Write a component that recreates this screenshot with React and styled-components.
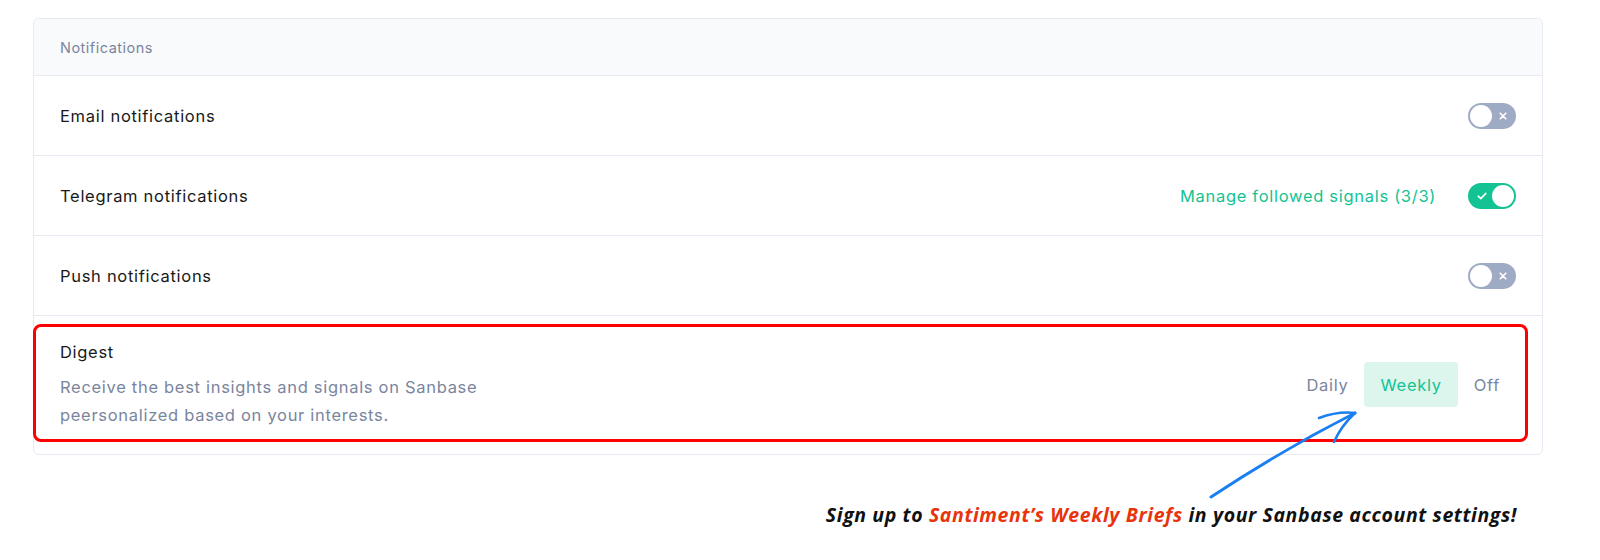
import React from 'react';
import styled, { createGlobalStyle } from 'styled-components';

const GlobalStyle = createGlobalStyle`
  body {
    margin: 0;
    background: #fff;
    font-family: Inter, "Noto Sans", sans-serif;
    color: #181919;
    letter-spacing: 0.7px;
  }
`;

const Page = styled.div`
  position: relative;
  width: 1600px;
  height: 560px;
  box-sizing: border-box;
  padding: 18px 57px 0 33px;
`;

const Card = styled.div`
  border: 1px solid #e7eaf3;
  border-radius: 6px;
  background: #fff;
`;

const Header = styled.div`
  height: 56px;
  display: flex;
  align-items: center;
  padding: 0 26px;
  background: #f9fafc;
  border-bottom: 1px solid #e7eaf3;
  border-radius: 6px 6px 0 0;
  font-size: 14.5px;
  letter-spacing: 0.5px;
  color: #7a859e;
`;

const Row = styled.div`
  position: relative;
  display: flex;
  align-items: center;
  justify-content: space-between;
  min-height: 79px;
  padding: 0 26px;
  border-bottom: ${p => (p.last ? 'none' : '1px solid #e7eaf3')};
`;

const DigestRow = styled(Row)`
  padding: 24px 26px 25px;
`;

const Label = styled.div`
  font-size: 16.5px;
  line-height: 24px;
`;

const Right = styled.div`
  display: flex;
  align-items: center;
  gap: 32px;
`;

const ManageLink = styled.a`
  font-size: 16.5px;
  color: #14c393;
  text-decoration: none;
  cursor: pointer;
`;

const ToggleTrack = styled.div`
  position: relative;
  width: 48px;
  height: 26px;
  border-radius: 13px;
  background: ${p => (p.on ? '#14c393' : '#9faac4')};
  display: flex;
  align-items: center;
  justify-content: ${p => (p.on ? 'flex-start' : 'flex-end')};
  padding: 0 9px;
  box-sizing: border-box;
`;

const Knob = styled.span`
  position: absolute;
  top: 2px;
  left: ${p => (p.on ? '24px' : '2px')};
  width: 22px;
  height: 22px;
  border-radius: 50%;
  background: #fff;
`;

const Toggle = ({ on }) => (
  <ToggleTrack on={on ? 1 : 0}>
    {on ? (
      <svg width="10" height="8" viewBox="0 0 10 8">
        <path d="M1.2 4.2 L3.8 6.6 L8.8 1.4" fill="none" stroke="#fff" strokeWidth="1.6" strokeLinecap="round" strokeLinejoin="round" />
      </svg>
    ) : (
      <svg width="8" height="8" viewBox="0 0 8 8">
        <path d="M1.2 1.2 L6.8 6.8 M6.8 1.2 L1.2 6.8" fill="none" stroke="#fff" strokeWidth="1.6" strokeLinecap="round" />
      </svg>
    )}
    <Knob on={on ? 1 : 0} />
  </ToggleTrack>
);

const DigestText = styled.div`
  display: flex;
  flex-direction: column;
  gap: 9px;
`;

const Description = styled.div`
  font-size: 16.5px;
  line-height: 28px;
  color: #7a859e;
  max-width: 450px;
`;

const Options = styled.div`
  display: flex;
  align-items: center;
`;

const Option = styled.button`
  height: 45px;
  padding: 0 16px;
  border: none;
  border-radius: 4px;
  font-family: inherit;
  letter-spacing: inherit;
  font-size: 16.5px;
  cursor: pointer;
  background: ${p => (p.active ? '#dcf6ee' : 'transparent')};
  color: ${p => (p.active ? '#14c393' : '#7a859e')};
`;

const Highlight = styled.div`
  position: absolute;
  left: -1px;
  top: 8px;
  right: 14px;
  bottom: 12px;
  border: 3px solid #ff0000;
  border-radius: 8px;
  pointer-events: none;
`;

const Footnote = styled.div`
  display: flex;
  justify-content: flex-end;
  padding-right: 26px;
  margin-top: 48px;
  font-family: "Open Sans", Lato, sans-serif;
  font-weight: 700;
  font-style: italic;
  font-size: 19.5px;
  line-height: 24px;
  letter-spacing: 0.6px;
  color: #111;
`;

const Accent = styled.span`
  color: #e8340c;
`;

const ArrowSvg = styled.svg`
  position: absolute;
  left: 1200px;
  top: 400px;
  overflow: visible;
`;

const App = () => (
  <>
    <GlobalStyle />
    <Page>
      <Card>
        <Header>Notifications</Header>
        <Row>
          <Label>Email notifications</Label>
          <Toggle />
        </Row>
        <Row>
          <Label>Telegram notifications</Label>
          <Right>
            <ManageLink>Manage followed signals (3/3)</ManageLink>
            <Toggle on />
          </Right>
        </Row>
        <Row>
          <Label>Push notifications</Label>
          <Toggle />
        </Row>
        <DigestRow last>
          <DigestText>
            <Label>Digest</Label>
            <Description>
              Receive the best insights and signals on Sanbase peersonalized based on your interests.
            </Description>
          </DigestText>
          <Options>
            <Option>Daily</Option>
            <Option active>Weekly</Option>
            <Option>Off</Option>
          </Options>
          <Highlight />
        </DigestRow>
      </Card>
      <Footnote>
        <span>
          Sign up to <Accent>Santiment’s Weekly Briefs</Accent> in your Sanbase account settings!
        </span>
      </Footnote>
      <ArrowSvg width="170" height="110" viewBox="0 0 170 110">
        <g fill="none" stroke="#1a7ff0" strokeLinecap="round">
          <path d="M11 97 Q 82 50 155 13" strokeWidth="3" />
          <path d="M119 18 Q 138 11 155 13" strokeWidth="2.6" />
          <path d="M134 42 Q 141 26 155 13" strokeWidth="2.6" />
        </g>
      </ArrowSvg>
    </Page>
  </>
);

export default App;
